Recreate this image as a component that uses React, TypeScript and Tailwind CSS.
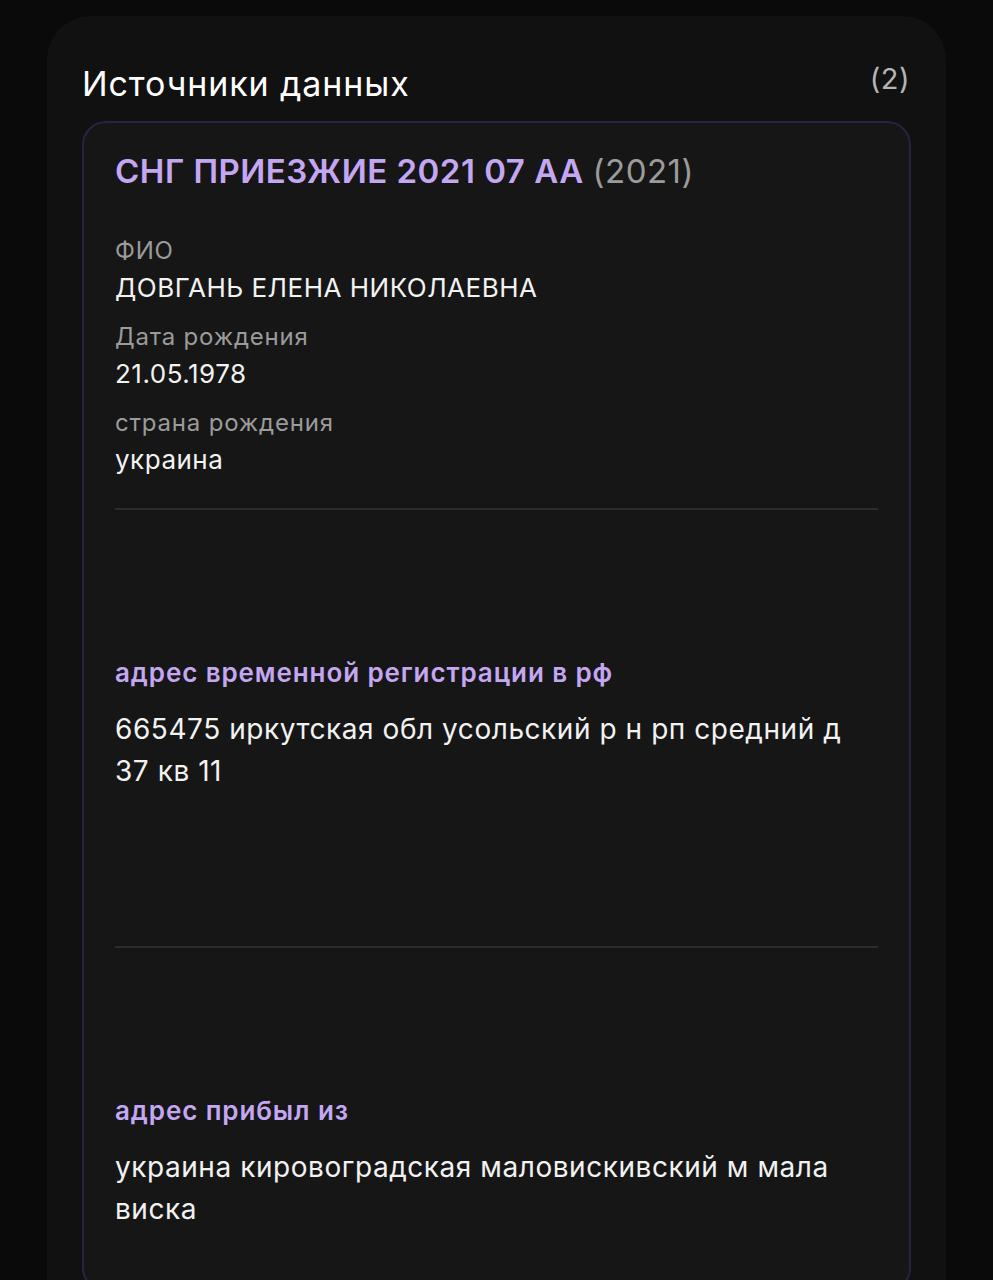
import React from "react";

const font = { fontFamily: "Inter, 'Noto Sans', sans-serif" };

function Field({ label, value }: { label: string; value: string }) {
  return (
    <div className="flex flex-col">
      <div className="text-[24px] leading-[34px] tracking-[0.8px] text-[#9b9b9b]">{label}</div>
      <div className="text-[26px] leading-[40px] tracking-[0.5px] text-[#f2f2f2]">{value}</div>
    </div>
  );
}

function Section({ title, value }: { title: string; value: string }) {
  return (
    <div className="flex flex-col">
      <div className="text-[26px] leading-[34px] tracking-[0.9px] font-semibold text-[#c4a7f2]">{title}</div>
      <div className="mt-[18px] text-[28px] leading-[42px] tracking-[0.55px] text-[#f2f2f2] pr-[20px]">{value}</div>
    </div>
  );
}

export default function App() {
  return (
    <div className="min-h-[1280px] w-full bg-[#0a0a0a] overflow-hidden" style={font}>
      <div className="mx-[47px] mt-[16px] rounded-[44px] bg-[#111111] px-[35px] pt-[46px] pb-[40px] min-h-[1300px]">
        <div className="flex items-start justify-between">
          <h2 className="text-[34px] leading-[44px] tracking-[0.9px] text-white">Источники данных</h2>
          <span className="text-[29px] leading-[36px] tracking-[0.5px] text-[#b5b5b5] mt-[-1px] mr-[1px]">(2)</span>
        </div>
        <div className="mt-[15px] rounded-[24px] border-2 border-[#2a2340] bg-[#161616] px-[31px] pt-[28px] pb-[60px]">
          <div className="text-[33px] leading-[40px] tracking-[0.5px] font-semibold">
            <span className="text-[#c4a7f2]">СНГ ПРИЕЗЖИЕ 2021 07 АА</span>{" "}
            <span className="font-normal text-[#9b9b9b]">(2021)</span>
          </div>
          <div className="mt-[43px] flex flex-col gap-[12px]">
            <Field label="ФИО" value="ДОВГАНЬ ЕЛЕНА НИКОЛАЕВНА" />
            <Field label="Дата рождения" value="21.05.1978" />
            <Field label="страна рождения" value="украина" />
          </div>
          <div className="mt-[28px] h-[2px] bg-[#2c2c2c]" />
          <div className="mt-[146px]">
            <Section
              title="адрес временной регистрации в рф"
              value="665475 иркутская обл усольский р н рп средний д 37 кв 11"
            />
          </div>
          <div className="mt-[154px] h-[2px] bg-[#2c2c2c]" />
          <div className="mt-[146px]">
            <Section
              title="адрес прибыл из"
              value="украина кировоградская маловискивский м мала виска"
            />
          </div>
        </div>
      </div>
    </div>
  );
}
